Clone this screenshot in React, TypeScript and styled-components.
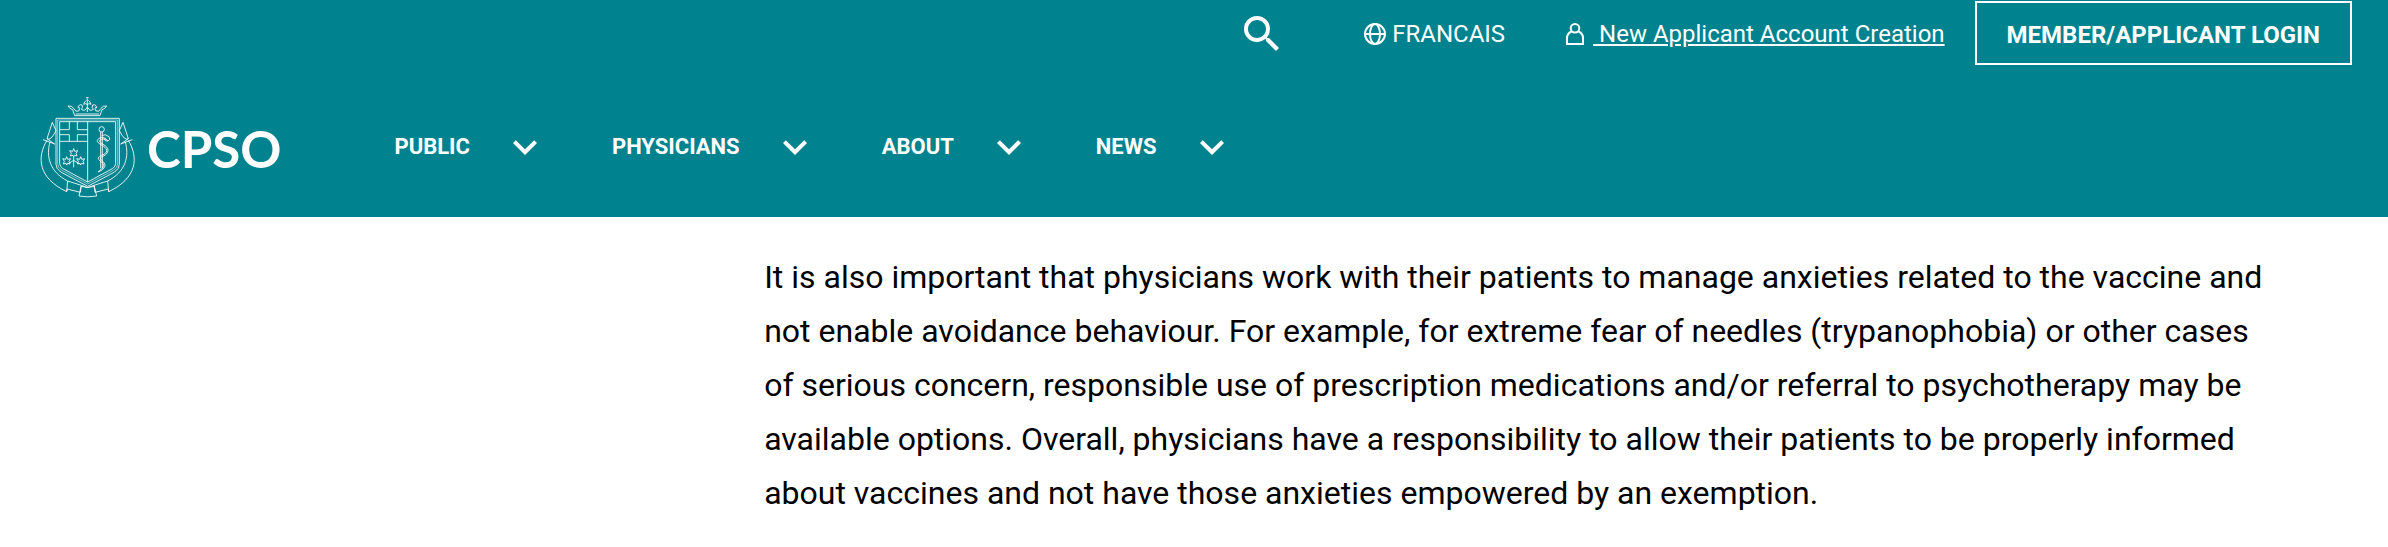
import React from "react";
import styled, { createGlobalStyle } from "styled-components";
import { MdExpandMore, MdSearch } from "react-icons/md";

const GlobalStyle = createGlobalStyle`
  * { box-sizing: border-box; }
  body {
    margin: 0;
    background: #fff;
    color: #000;
    font-family: Roboto, "Liberation Sans", sans-serif;
  }
`;

const Header = styled.header`
  background: #00838f;
  color: #fff;
  padding: 1px 36px 18px 38px;
`;

const UtilityBar = styled.div`
  display: flex;
  justify-content: flex-end;
  align-items: center;
  font-size: 24px;
  line-height: 28px;
`;

const IconButton = styled.button`
  display: flex;
  padding: 0;
  border: 0;
  background: none;
  color: inherit;
  cursor: pointer;
  svg {
    width: 48px;
    height: 48px;
  }
`;

const SearchButton = styled(IconButton)`
  margin-right: 78px;
  padding-top: 2px;
`;

const UtilityLink = styled.a<{ $gap: number; $after: number; $underlined?: boolean }>`
  display: flex;
  align-items: center;
  gap: ${(p) => p.$gap}px;
  margin-right: ${(p) => p.$after}px;
  padding-top: 2px;
  color: inherit;
  text-decoration: none;
  span {
    white-space: pre;
    text-decoration: ${(p) => (p.$underlined ? "underline" : "none")};
  }
`;

const LoginButton = styled.button`
  height: 64px;
  padding: 3px 30px 0;
  border: 2px solid #fff;
  background: transparent;
  color: inherit;
  font: 700 24px/28px Roboto, "Liberation Sans", sans-serif;
  cursor: pointer;
`;

const MainBar = styled.div`
  display: flex;
  align-items: center;
  margin-top: 30px;
`;

const Brand = styled.a`
  display: flex;
  align-items: center;
  gap: 9px;
  margin-right: 113px;
  color: inherit;
  text-decoration: none;
  font: 700 51px/60px Lato, "Liberation Sans", sans-serif;
  span {
    padding-top: 4px;
  }
`;

const Nav = styled.nav`
  display: flex;
  gap: 63px;
`;

const NavItem = styled.div`
  display: flex;
  align-items: center;
  gap: 31px;
`;

const NavLink = styled.a`
  color: inherit;
  text-decoration: none;
  font-size: 22px;
  line-height: 26px;
  font-weight: 700;
`;

const Main = styled.main`
  display: grid;
  grid-template-columns: 32fr 63fr 5fr;
`;

const Article = styled.article`
  grid-column: 2;
  padding: 33px 0 27px;
`;

const Paragraph = styled.p`
  margin: 0;
  font-size: 32px;
  line-height: 54px;
`;

const Leaf = ({ x, y }: { x: number; y: number }) => (
  <path
    transform={`translate(${x} ${y})`}
    d="M0-13 3-5 12-7 7 1 10 9 2 7 0 12-2 7-10 9-7 1-12-7-3-5Z"
  />
);

/* Coat of arms: crown, quartered shield, staff of Asclepius and ribbon. */
const Crest = () => (
  <svg width="100" height="104" viewBox="24 15 300 312" fill="none" stroke="#fff" strokeWidth="2.6" strokeLinejoin="round" aria-hidden="true">
    <path d="M134 77 128 59Q119 57 114 48 125 46 131 55 137 68 146 63 153 56 145 50M210 77 216 59Q225 57 230 48 219 46 213 55 207 68 198 63 191 56 199 50M134 77H210M137 72H207M144 55Q146 41 156 45 160 54 154 58 165 66 171 52M200 55Q198 41 188 45 184 54 190 58 179 66 173 52M172 66V25M168 23H176M169 31Q163 35 161 43 168 38 172 44 176 38 183 43 181 35 175 31" />
    <path d="M78 85H268V223Q268 236 254 246L173 289 92 246Q78 236 78 223Z" />
    <path strokeOpacity="0.6" d="M83 90H263V222Q263 233 250 241L173 282 96 241Q83 233 83 222Z" />
    <path d="M89 95H257V220Q257 230 247 236L173 276 99 236Q89 230 89 220Z" />
    <path d="M173 95V276M89 154H173M89 119H118V95M142 95V119H173M89 134H118V154M142 154V134H173" />
    <Leaf x={131} y={189} />
    <Leaf x={110} y={213} />
    <Leaf x={152} y={213} />
    <path d="M131 201V232M113 222 131 211 149 222" />
    <circle cx="215" cy="118" r="8" />
    <path d="M212 126V235M217 126V235" />
    <path d="M215 137Q226 130 237 140 243 149 234 153 224 155 222 145M234 153C222 136 205 143 202 151 199 162 229 167 230 181 231 196 205 194 205 205 206 215 222 216 221 226 219 237 209 240 204 246M228 151C222 144 211 148 208 153 209 160 235 167 234 181 233 198 211 199 211 205 212 211 226 217 225 226 222 239 211 243 204 246" />
    <path d="M67 97 78 122M67 97 51 146 74 162M51 146Q62 154 78 122M51 151C20 202 24 264 110 305L113 273C58 245 48 198 60 156M39 149 74 162" />
    <path d="M279 97 268 122M279 97 295 146 272 162M295 146Q284 154 268 122M295 151C326 202 322 264 236 305L233 273C288 245 298 198 286 156M307 149 272 162" />
    <path d="M110 305 111 297 151 307M113 273 154 286 151 307M154 286 173 293 192 286 195 307M236 305 235 297 195 307M233 273 192 286M153 289Q173 296 193 289L200 318Q173 323 147 318Z" />
  </svg>
);

const GlobeIcon = () => (
  <svg width="22" height="22" viewBox="0 0 22 22" fill="none" stroke="currentColor" strokeWidth="2" aria-hidden="true">
    <circle cx="11" cy="11" r="10" />
    <ellipse cx="11" cy="11" rx="5" ry="10" />
    <path d="M1 11H21" />
  </svg>
);

const PersonIcon = () => (
  <svg width="18" height="22" viewBox="0 0 18 22" fill="none" stroke="currentColor" strokeWidth="2" aria-hidden="true">
    <circle cx="9" cy="5.3" r="4.3" />
    <path d="M5.5 8.5Q1 10.5 1 15V21H17V15Q17 10.5 12.5 8.5" />
  </svg>
);

const sections = ["PUBLIC", "PHYSICIANS", "ABOUT", "NEWS"];

export default function App() {
  return (
    <>
      <GlobalStyle />
      <Header>
        <UtilityBar>
          <SearchButton aria-label="Search">
            <MdSearch />
          </SearchButton>
          <UtilityLink href="#francais" $gap={6} $after={61}>
            <GlobeIcon />
            <span>FRANCAIS</span>
          </UtilityLink>
          <UtilityLink href="#new-account" $gap={9} $after={30} $underlined>
            <PersonIcon />
            <span> New Applicant Account Creation</span>
          </UtilityLink>
          <LoginButton>MEMBER/APPLICANT LOGIN</LoginButton>
        </UtilityBar>
        <MainBar>
          <Brand href="#home">
            <Crest />
            <span>CPSO</span>
          </Brand>
          <Nav aria-label="Main">
            {sections.map((name) => (
              <NavItem key={name}>
                <NavLink href={`#${name.toLowerCase()}`}>{name}</NavLink>
                <IconButton aria-label={`Open ${name} menu`}>
                  <MdExpandMore />
                </IconButton>
              </NavItem>
            ))}
          </Nav>
        </MainBar>
      </Header>
      <Main>
        <Article>
          <Paragraph>
            It is also important that physicians work with their patients to manage anxieties related to the vaccine and
            not enable avoidance behaviour. For example, for extreme fear of needles (trypanophobia) or other cases of
            serious concern, responsible use of prescription medications and/or referral to psychotherapy may be
            available options. Overall, physicians have a responsibility to allow their patients to be properly informed
            about vaccines and not have those anxieties empowered by an exemption.
          </Paragraph>
        </Article>
      </Main>
    </>
  );
}
